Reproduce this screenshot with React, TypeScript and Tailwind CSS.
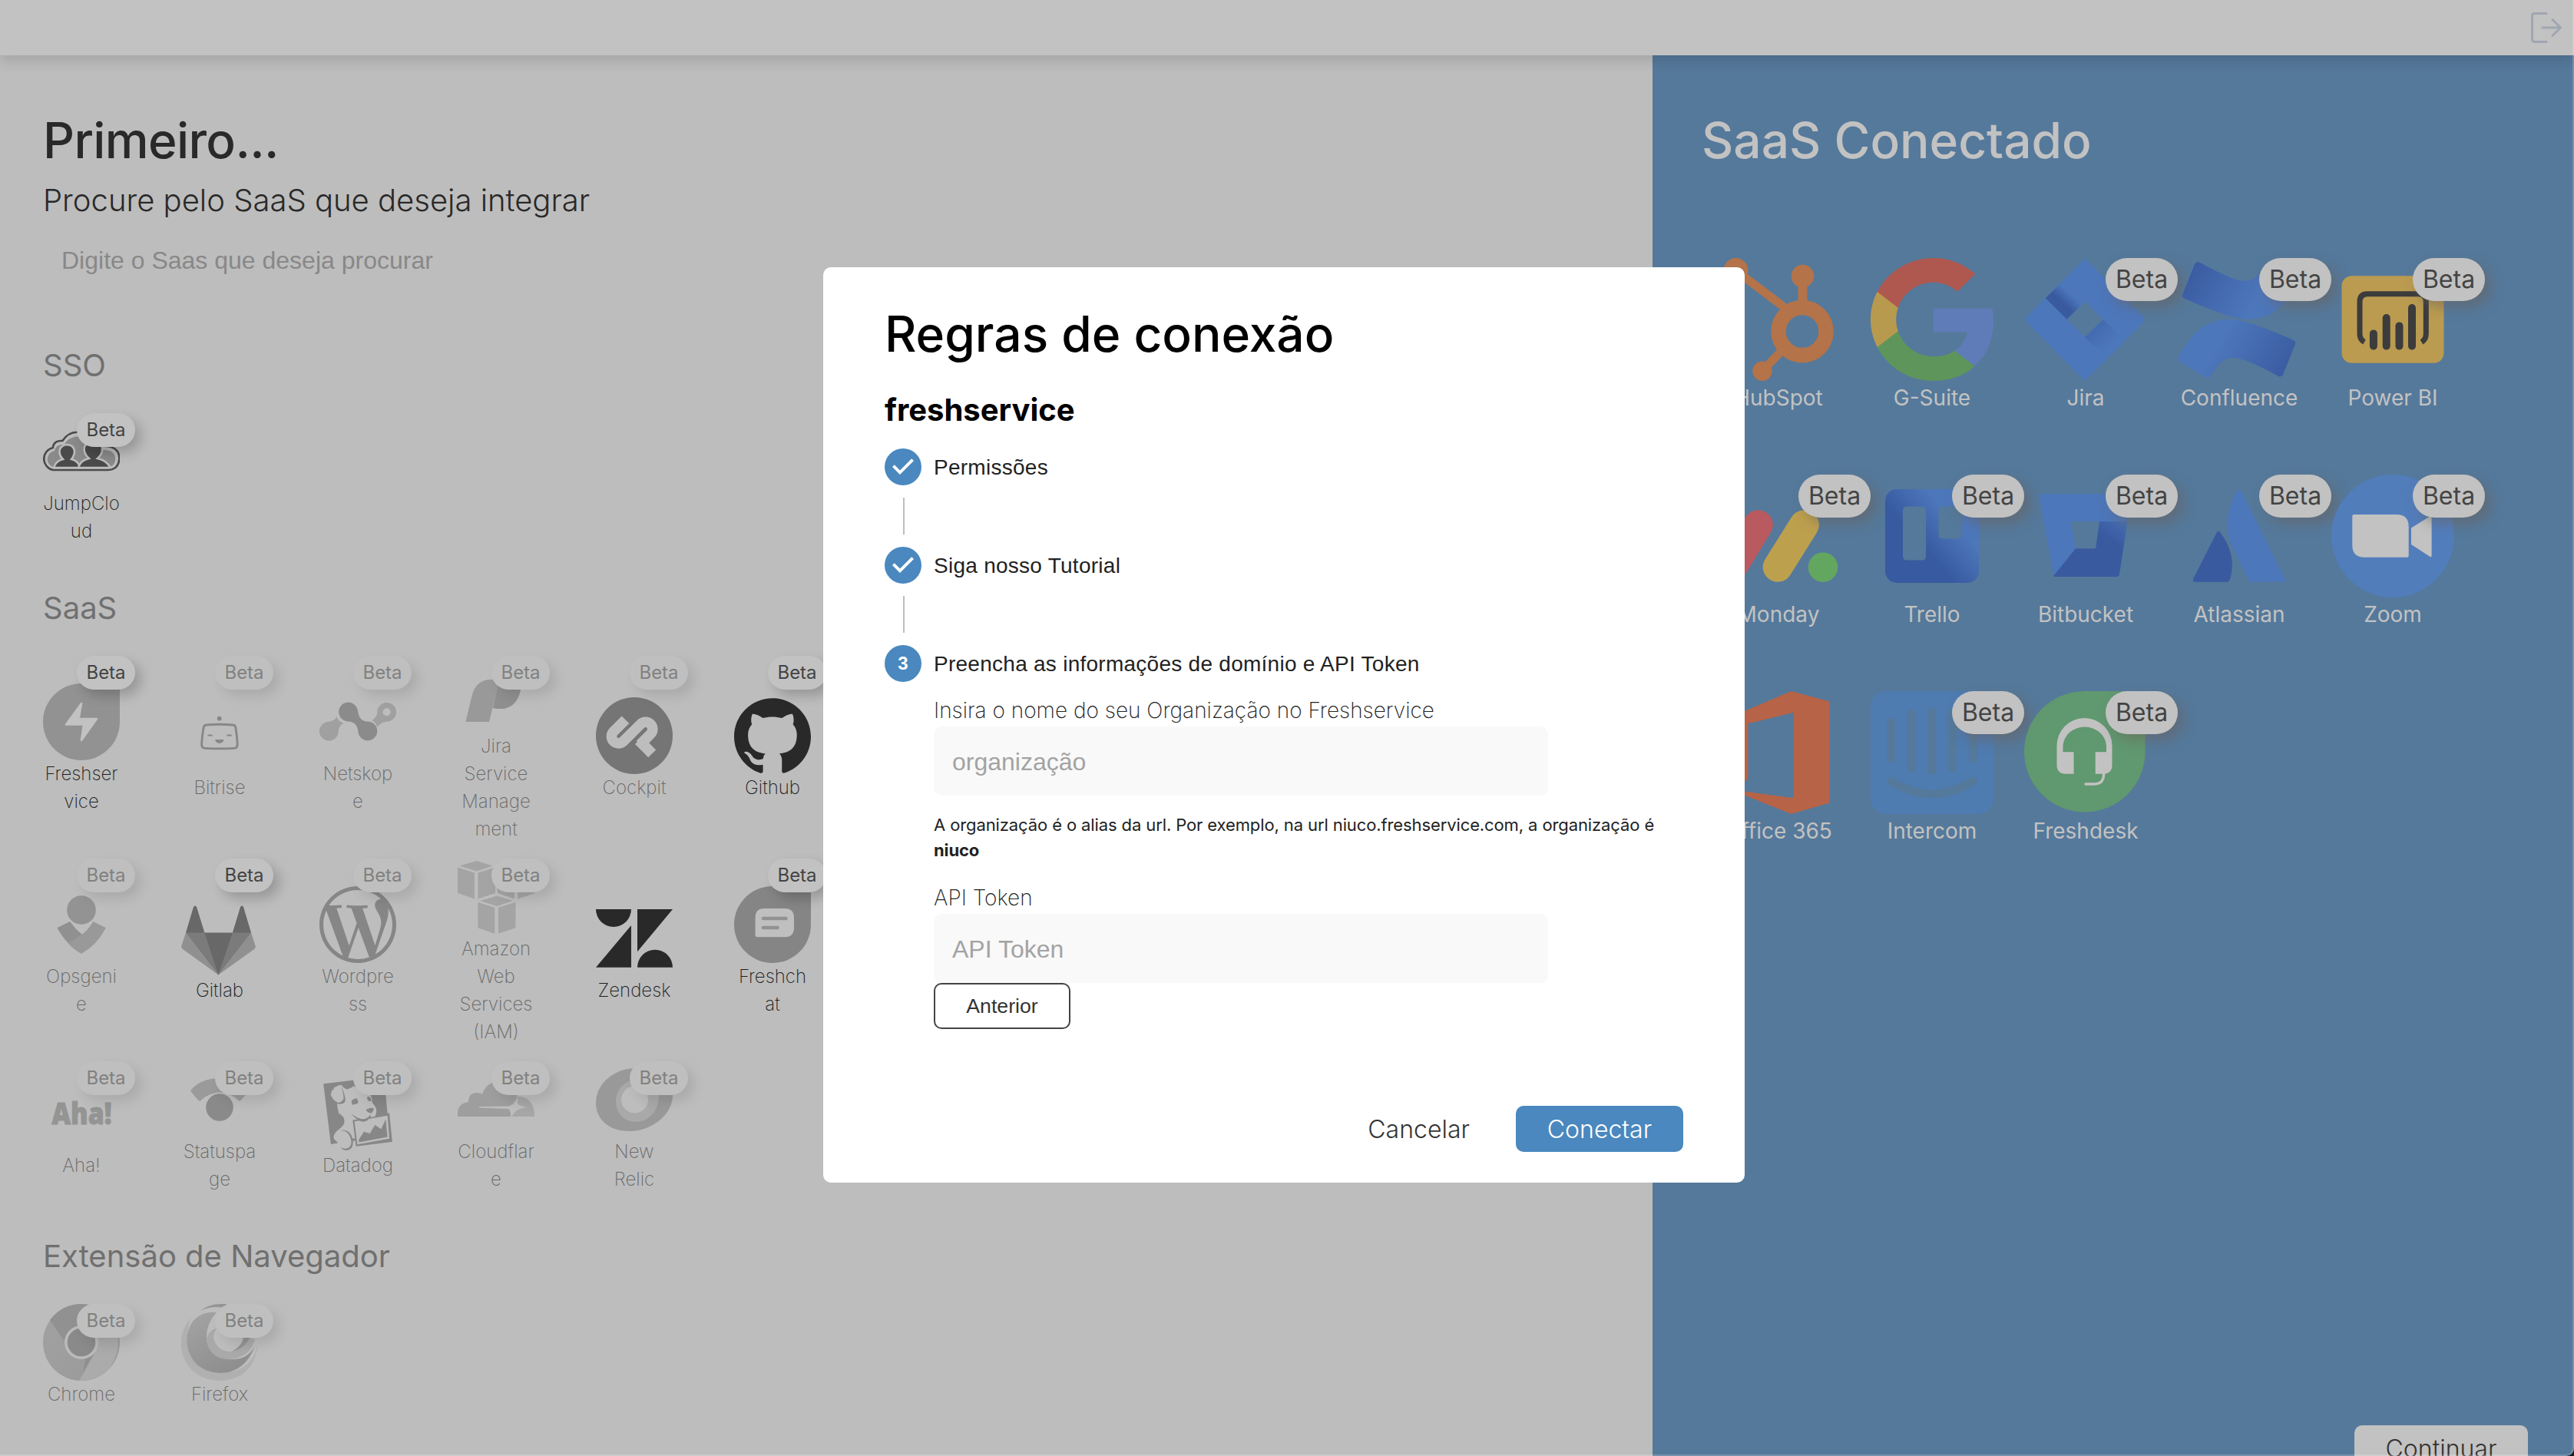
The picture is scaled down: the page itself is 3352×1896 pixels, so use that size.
import React from "react";
import { SiDatadog, SiGithub, SiWordpress } from "react-icons/si";

interface App {
  name: string;
  icon: React.ReactNode;
  enabled?: boolean;
  beta?: boolean;
}

const Drop = ({ color, children }: any) => (
  <svg viewBox="0 0 100 100" className="size-full">
    <path d="M50 0H97Q100 0 100 3V50A50 50 0 1 1 50 0Z" fill={color} />
    {children}
  </svg>
);

const JumpCloudIcon = () => (
  <svg viewBox="0 0 100 100" className="size-full">
    <g transform="translate(-3.8 1) scale(1.042 1)">
      <path d="M16 73A15 15 0 0 1 16 44Q17 34 28 35Q36 22 50 24Q68 24 74 42Q99 40 99 58Q98 73 84 73Z" fill="#bdbdbd" stroke="#4a4a4a" strokeWidth="2.5" />
      <path d="M16 69A11 11 0 0 1 18 48Q20 39 30 40Q36 29 50 29Q66 29 71 47Q94 45 94 58Q94 69 84 69Z" fill="#8a8a8a" />
    </g>
    <g fill="#4a4a4a" stroke="#bdbdbd" strokeWidth="2.5">
      <path d="M14 71Q17 62 26 60Q20 54 22 47Q25 41 32 41Q40 42 41 49Q41 55 37 60Q46 62 48 71Z" />
      <path d="M46 71Q49 61 60 59Q52 52 54 44Q57 36 66 36Q76 37 77 45Q78 53 71 59Q82 61 88 71Z" />
    </g>
  </svg>
);

const FreshserviceIcon = () => (
  <Drop color="#929292">
    <path d="M50 26L30 53.5H53L50 74L70 46H46.5Z" fill="#c2c2c2" stroke="#c2c2c2" strokeWidth="2.6" strokeLinejoin="round" />
  </Drop>
);

const BitriseIcon = () => (
  <svg viewBox="0 0 100 100" className="size-full" fill="#878787">
    <circle cx="49.7" cy="27.7" r="2.9" />
    <path d="M33 36Q50 34.6 67 36Q70 36 70.8 39Q72.600 49 73.200 61Q73.200 66.200 69 66.400Q50 67.400 31 66.400Q26.600 66.200 26.600 61Q27.200 49 29.200 39Q30 36 33 36Z" fill="none" stroke="#878787" strokeWidth="2.9" />
    <path d="M33.600 50.500A4.200 3.400 0 0 1 41.600 50.500Z" />
    <path d="M58.600 50.500A4.200 3.400 0 0 1 66.600 50.500Z" />
    <path d="M44.200 55H55.200A5.500 5 0 0 1 44.200 55Z" />
  </svg>
);

const NetskopeIcon = () => (
  <svg viewBox="0 0 100 100" className="size-full">
    <path d="M22.500 43.500Q24.500 49.500 31.500 51.500Q24.500 56 24.700 62.500A12.400 12.400 0 1 1 12.300 49.800Q19 49.500 22.500 43.500Z" fill="#a0a0a0" />
    <path d="M49.600 34C51 46 56 49.500 63 49.600A12.400 12.400 0 1 1 50.600 64C49.500 53 45 50 37.500 49.400A12.400 12.400 0 1 1 49.600 34Z" fill="#8b8b8b" />
    <path d="M75 57Q74.500 51 68 48Q75.500 43.500 75.200 37.500A12.400 12.400 0 1 1 88 49.700Q81 49.500 75 57Z" fill="#a0a0a0" />
    <circle cx="87.600" cy="37.200" r="5" fill="#bdbdbd" />
  </svg>
);

const JiraServiceIcon = () => (
  <svg viewBox="0 0 100 100" className="size-full">
    <path d="M10.400 86L18.500 52Q24 31 43 31H82Q84 50 74 61.500Q64 72 46 68L52.500 39L41 86Z" fill="#999999" />
    <path d="M53 36H82.500Q83 50 74 61.500Q64 72 46 68Z" fill="#8f8f8f" />
  </svg>
);

const CockpitIcon = () => (
  <svg viewBox="0 0 100 100" className="size-full">
    <circle cx="50" cy="50" r="50" fill="#757575" />
    <path d="M38.500 29.200L22.700 45A9 9 0 0 0 35.400 57.700L58.300 35A9 9 0 0 1 71.100 48L57.500 61.600" fill="none" stroke="#bdbdbd" strokeWidth="13.600" />
    <path d="M56 56L73.200 73.400" fill="none" stroke="#bdbdbd" strokeWidth="14" />
  </svg>
);

const OpsgenieIcon = () => (
  <svg viewBox="0 0 100 100" className="size-full" strokeLinejoin="round" strokeWidth="1.500">
    <circle cx="50" cy="31" r="18.800" fill="#939393" />
    <path d="M35 47L19.500 54.500Q25 65 33.300 73.500L50 63Q42 57 35 47Z" fill="#909090" stroke="#909090" />
    <path d="M65.400 47L80.800 54.500Q70 76 50 87Q40 81.500 33.300 73.900Q56 64 65.400 47Z" fill="#999999" stroke="#999999" />
  </svg>
);

const GitlabIcon = () => (
  <svg viewBox="0 0 100 100" className="size-full">
    <path d="M6 42.600L16 9Q18 6 20 9L30.400 42.600H66.900L77 9Q79 6 81 9L91 42.600L48.300 97.600Z" fill="#686868" />
    <path d="M6 42.600H30.400L48.300 97.600ZM91 42.600H66.900L48.300 97.600Z" fill="#7b7b7b" />
    <path d="M6 42.600L.200 60Q0 62.500 2 64L48.300 97.600ZM91 42.600L96.700 60Q97 62.500 95 64L48.300 97.600Z" fill="#909090" />
  </svg>
);

const cube = "M24.700 3L45.400 9.500L24.700 16.600L2.600 9.500ZM0 11.600L21.900 18.400V52.400L0 44.900ZM26.500 18.400L49 11.600V44.900L26.500 52.400Z";

const AwsIcon = () => (
  <svg viewBox="0 0 100 100" className="size-full" fill="#a4a4a4">
    <path d={cube} />
    <path d={cube} transform="translate(51.800 0)" />
    <path d={cube} transform="translate(26.400 45.400)" />
  </svg>
);

const ZendeskIcon = () => (
  <svg viewBox="0 0 100 100" className="size-full" fill="#292929">
    <path d="M0 12H46A23 23 0 0 1 0 12ZM46 33V87.700H0ZM54 12H100L54 67.300ZM54 87.700A23 23 0 0 1 100 87.700Z" />
  </svg>
);

const FreshchatIcon = () => (
  <Drop color="#858585">
    <path d="M39 29H66Q78 29 78 41V54Q78 66.300 66 66.300H30Q27.600 66.300 27.600 64V41Q27.600 29 39 29Z" fill="#bfbfbf" />
    <path d="M38 42H67.500M38 54H56.500" stroke="#929292" strokeWidth="4.600" strokeLinecap="round" />
  </Drop>
);

const AhaIcon = () => (
  <svg viewBox="0 0 100 100" className="size-full">
    <text x="11.500" y="64" fontSize="38" fontWeight="800" textLength="78" lengthAdjust="spacingAndGlyphs" fill="#949494" stroke="#949494" strokeWidth="1" fontFamily="'Open Sans', sans-serif">
      Aha!
    </text>
  </svg>
);

const StatuspageIcon = () => (
  <svg viewBox="0 0 100 100" className="size-full">
    <path d="M13 37Q26 22 50 22Q74 22 87 37Q88 38.500 87 40L77.500 51Q76 52.500 74.500 51Q64 41 50 41Q36 41 25.500 51Q24 52.500 22.500 51L13 40Q12 38.500 13 37Z" fill="#9a9a9a" />
    <circle cx="50" cy="60" r="19.500" fill="#bdbdbd" />
    <circle cx="50" cy="60" r="17.800" fill="#8a8a8a" />
  </svg>
);

const CloudflareIcon = () => (
  <svg viewBox="0 0 100 100" className="size-full">
    <path d="M0 72V68Q0 55 14 53Q14 41 25 41Q30 41 32 43Q38 26 55 26Q74 28 78 44L70 72Z" fill="#9e9e9e" />
    <path d="M71 72Q73 64 78 61V46Q96 45 100 66V72Z" fill="#a6a6a6" />
    <path d="M28 59L66 58.500Q73 57 75 51Q78 58 90 60Q78 61.500 74 67L69 72.500Q70 65 66 62L28 60.500Z" fill="#bdbdbd" />
  </svg>
);

const NewRelicIcon = () => (
  <svg viewBox="0 0 100 100" className="size-full">
    <path d="M52 9C80 9 100 24 100 44C100 70 72 91 44 91C16 91 0 75 0 54C0 29 24 9 52 9Z" fill="#999999" />
    <path d="M56 23C72 23 82 33 82 46C82 64 68 79 53 79C37 79 26 68 26 52C26 36 40 23 56 23Z" fill="#a9a9a9" />
    <ellipse cx="50.500" cy="50" rx="17.500" ry="17.500" fill="#bdbdbd" />
  </svg>
);

const ChromeIcon = () => (
  <svg viewBox="0 0 100 100" className="size-full">
    <defs>
      <linearGradient id="chromeBase" x1="0" y1="0" x2="1" y2="1">
        <stop offset="0" stopColor="#a2a2a2" />
        <stop offset="1" stopColor="#999999" />
      </linearGradient>
    </defs>
    <circle cx="50" cy="50" r="50" fill="url(#chromeBase)" />
    <path d="M9 21A50 50 0 0 1 94 27H50Q34 28 29 50Z" fill="#919191" />
    <path d="M50 28H94Q104 56 88 82Q72 100 47 100L67 65Q74 46 60 32Z" fill="#ababab" />
    <path d="M55 72L67 62L52 90Z" fill="#8f8f8f" />
    <circle cx="50" cy="50" r="22" fill="#bababa" />
    <circle cx="50" cy="50" r="18.300" fill="#8a8a8a" />
  </svg>
);

const FirefoxIcon = () => (
  <svg viewBox="0 0 100 100" className="size-full">
    <defs>
      <linearGradient id="foxBody" x1="0" y1="0" x2=".6" y2="1">
        <stop offset="0" stopColor="#a4a4a4" />
        <stop offset="1" stopColor="#8e8e8e" />
      </linearGradient>
    </defs>
    <path d="M13 18Q-4 36 1 62Q10 98 50 100Q96 98 100 50Q94 88 52 90Q8 86 8 46Q8 28 13 18Z" fill="#b0b0b0" />
    <path d="M25 9Q36 -1 58 0L62 6Q40 1 25 9Z" fill="#959595" />
    <path d="M46 11Q26 9 14 24Q4 40 9 60Q18 88 50 90Q84 90 97 52Q88 74 62 72Q36 70 33 46Q32 26 46 11Z" fill="url(#foxBody)" />
    <path d="M33 45Q36 72 62 72Q90 70 96 46L80 42Q80 62 62 62Q46 60 42 44Q42 38 46 32Q36 34 33 45Z" fill="#a9a9a9" />
    <path d="M66 62Q84 58 90 42H82Q80 54 66 62Z" fill="#939393" />
  </svg>
);

const HubSpotIcon = () => (
  <svg viewBox="0 0 160 160" className="size-full" fill="#b47349" stroke="#b47349">
    <g stroke="none">
      <circle cx="24.500" cy="16" r="16" />
      <circle cx="111.500" cy="23.500" r="14.800" />
      <circle cx="59" cy="147.300" r="12.700" />
    </g>
    <path d="M24 16L90 66M84 121L61 145" strokeWidth="11" />
    <path d="M111.500 30V66" strokeWidth="12" />
    <circle cx="111" cy="95.600" r="31" fill="none" strokeWidth="19.500" />
  </svg>
);

const GoogleIcon = () => (
  <svg viewBox="0 0 533.5 544.3" preserveAspectRatio="none" className="size-full">
    <path fill="#5f7cb8" d="M533.5 278.400c0-18.500-1.500-37.100-4.700-55.300H272.100v104.800h147c-6.100 33.800-25.700 63.700-54.400 82.700v68h87.700c51.500-47.400 81.100-117.400 81.100-200.200z" />
    <path fill="#5e955b" d="M272.100 544.300c73.400 0 135.300-24.100 180.400-65.700l-87.700-68c-24.400 16.600-55.900 26-92.600 26-71 0-131.200-47.900-152.800-112.300H28.900v70.100c46.200 91.900 140.300 149.900 243.200 149.900z" />
    <path fill="#b89a4e" d="M119.300 324.300c-11.400-33.800-11.400-70.400 0-104.200V150H28.900c-38.600 76.900-38.600 167.500 0 244.400l90.400-70.100z" />
    <path fill="#ae5850" d="M272.100 107.700c38.800-.600 76.300 14 104.400 40.800l77.700-77.700C405 24.600 339.700-.800 272.100 0 169.200 0 75.100 58 28.900 150l90.400 70.100c21.500-64.500 81.800-112.400 152.800-112.400z" />
  </svg>
);

const JiraIcon = () => (
  <svg viewBox="0 0 160 160" className="size-full">
    <defs>
      <linearGradient id="jiraA" gradientUnits="userSpaceOnUse" x1="60" y1="46" x2="45" y2="62">
        <stop offset="0" stopColor="#4d77bb" />
        <stop offset=".7" stopColor="#3a5aa0" />
      </linearGradient>
      <linearGradient id="jiraB" gradientUnits="userSpaceOnUse" x1="90" y1="92" x2="112" y2="114">
        <stop offset="0" stopColor="#426ab0" />
        <stop offset="1" stopColor="#4d77bb" />
      </linearGradient>
    </defs>
    <path d="M79 .600L155 76Q158.500 80 155 84L79 160L3.500 84Q.500 80 3.500 76ZM79 56.500L55.500 79.700L79 103.300L103 80Z" fill="#4d77bb" fillRule="evenodd" />
    <path d="M27.800 52.300L46.400 34L76 59.500L55.500 79.700Z" fill="url(#jiraA)" />
    <path d="M103 80L131 108L112 127Q92 118 79 103.300Z" fill="url(#jiraB)" />
  </svg>
);

const ConfluenceIcon = () => (
  <svg viewBox="0 0 160 160" className="size-full">
    <defs>
      <linearGradient id="confluence" gradientUnits="userSpaceOnUse" x1="145" y1="150" x2="60" y2="100">
        <stop offset="0" stopColor="#3a5aa0" />
        <stop offset="1" stopColor="#4d77bb" />
      </linearGradient>
    </defs>
    <path id="confluencePart" d="M1 129Q25 80 67 79.700Q88 79 151 107Q154 109 153 112L137 152Q135 155.500 131 154Q88 130 72 129.700Q58 130 50 143L42 154Q39.500 157.500 36 155L1.500 134Q-.500 132 1 129Z" fill="url(#confluence)" />
    <use href="#confluencePart" transform="rotate(180 79.600 79.800)" />
  </svg>
);

const PowerBIIcon = () => (
  <svg viewBox="0 0 160 160" className="size-full">
    <rect x="13.500" y="23.300" width="133" height="113.500" rx="13" fill="#ba9b50" />
    <path d="M43 109.500Q37 106 37 99V57Q37 46.800 47 46.800H113Q123.300 46.800 123.300 57V99Q123.300 106 117.500 109.500" fill="none" stroke="#3c3c3c" strokeWidth="7" />
    <path d="M54.900 98.400V114.600M71.700 78V114.600M88.500 88.400V114.600M105 65V114.600" stroke="#3c3c3c" strokeWidth="10" strokeLinecap="round" />
  </svg>
);

const MondayIcon = () => (
  <svg viewBox="0 0 160 160" className="size-full">
    <g strokeWidth="38.600" strokeLinecap="round">
      <path d="M53.500 65.500L20 120.400" stroke="#b85a60" />
      <path d="M113.500 65.500L79 120.400" stroke="#bda04e" />
    </g>
    <circle cx="138" cy="120.700" r="19.300" fill="#63a65f" />
  </svg>
);

const TrelloIcon = () => (
  <svg viewBox="0 0 160 160" className="size-full">
    <defs>
      <linearGradient id="trello" gradientUnits="userSpaceOnUse" x1="65" y1="90" x2="105" y2="55">
        <stop offset="0" stopColor="#385aa0" />
        <stop offset="1" stopColor="#4d77bb" />
      </linearGradient>
    </defs>
    <rect x="19" y="19" width="122" height="122" rx="15" fill="url(#trello)" />
    <rect x="42" y="41.600" width="30" height="70" rx="5" fill="#55799b" />
    <rect x="88.400" y="41.600" width="30" height="42" rx="5" fill="#55799b" />
  </svg>
);

const BitbucketIcon = () => (
  <svg viewBox="0 0 160 160" className="size-full">
    <defs>
      <linearGradient id="bitbucket" gradientUnits="userSpaceOnUse" x1="130" y1="58" x2="112" y2="84">
        <stop offset="0" stopColor="#4870b5" />
        <stop offset="1" stopColor="#3a5aa0" />
      </linearGradient>
    </defs>
    <path d="M22 25.300H138Q141 25.300 140.500 29L134.600 61H61L67 96.300L38.500 132.500L19.500 29Q19 25.300 22 25.300Z" fill="#4d77bb" />
    <path d="M98 61H134.600L124 130Q123.500 133 120.500 133H41Q39 133 38 132L67 96.300H93Z" fill="url(#bitbucket)" />
  </svg>
);

const AtlassianIcon = () => (
  <svg viewBox="0 0 160 160" className="size-full">
    <path d="M77.500 21Q80 17.500 82.500 21L139 135.500Q141 139.700 137 139.700H96Q93.500 139.700 92 137L70 92Q56 60 77.500 21Z" fill="#4d77bb" />
    <path d="M51 75Q53 72 55 75Q77 104 68.500 135Q67 139.700 64 139.700H22.500Q18.500 139.700 20.500 135Z" fill="#3a5aa0" />
  </svg>
);

const ZoomIcon = () => (
  <svg viewBox="0 0 160 160" className="size-full">
    <circle cx="80" cy="80" r="80" fill="#527dbb" />
    <path d="M29.500 52H85Q100.700 52 100.700 68V106Q100.700 107.800 98.500 107.800H43Q27.300 107.800 27.300 92V54Q27.300 52 29.500 52ZM104 69.500L129 54Q130.600 53.500 130.600 55.500V105.500Q130.600 108 128.600 107L104 91Z" fill="#c2c2c2" />
  </svg>
);

const OfficeIcon = () => (
  <svg viewBox="0 0 160 160" className="size-full">
    <path d="M17 34L96.500 0L145 13Q146.700 13.500 146.700 16V143.500Q146.700 145.500 145 146L96.500 160L17 128L100 139.300V27.700L40.400 42.300V112Q40.400 115 38 116.500L17 128Z" fill="#b76347" />
  </svg>
);

const IntercomIcon = () => (
  <svg viewBox="0 0 160 160" className="size-full">
    <rect width="160" height="160" rx="20" fill="#4e7bb0" />
    <path d="M26.600 40V88M53.200 29V100M80 26.500V103.500M106.600 29V100M133.400 40V88M26.600 117Q80 151 133.400 117" fill="none" stroke="#55799b" strokeWidth="10.700" strokeLinecap="round" />
  </svg>
);

const FreshdeskIcon = () => (
  <svg viewBox="0 0 160 160" className="size-full">
    <path d="M78.800 0H153Q157.600 0 157.600 5V78.800A78.800 78.800 0 1 1 78.800 0Z" fill="#60986f" />
    <path d="M42.500 71A36 36 0 0 1 114.500 71V96Q114.500 107.700 103 107.700H92.700V79.300H107V71A28.300 26 0 0 0 50.500 71V79.300H64.600V107.700H54Q42.500 107.700 42.500 96Z" fill="#c2c2c2" />
    <path d="M103.600 106V109Q103 121 91 121H80" fill="none" stroke="#c2c2c2" strokeWidth="3.500" strokeLinecap="round" />
  </svg>
);

const CheckCircle = () => (
  <svg viewBox="0 0 24 24" className="size-[52px] -m-0.5" fill="#4a88bf">
    <path d="M12 0a12 12 0 1 0 0 24 12 12 0 0 0 0-24zm-2 17l-5-5 1.400-1.400 3.600 3.600 7.600-7.600L19 8l-9 9z" transform="translate(.92 .92) scale(.923)" />
  </svg>
);

const sso: App[] = [{ name: "JumpClo\nud", icon: <JumpCloudIcon />, enabled: true, beta: true }];

const saas: App[] = [
  { name: "Freshser\nvice", icon: <FreshserviceIcon />, enabled: true, beta: true },
  { name: "Bitrise", icon: <BitriseIcon />, beta: true },
  { name: "Netskop\ne", icon: <NetskopeIcon />, beta: true },
  { name: "Jira\nService\nManage\nment", icon: <JiraServiceIcon />, beta: true },
  { name: "Cockpit", icon: <CockpitIcon />, beta: true },
  { name: "Github", icon: <SiGithub className="size-full text-[#292929]" />, enabled: true, beta: true },
  { name: "Opsgeni\ne", icon: <OpsgenieIcon />, beta: true },
  { name: "Gitlab", icon: <GitlabIcon />, enabled: true, beta: true },
  { name: "Wordpre\nss", icon: <SiWordpress className="size-full text-[#868686]" />, beta: true },
  { name: "Amazon\nWeb\nServices\n(IAM)", icon: <AwsIcon />, beta: true },
  { name: "Zendesk", icon: <ZendeskIcon />, enabled: true },
  { name: "Freshch\nat", icon: <FreshchatIcon />, enabled: true, beta: true },
  { name: "Aha!", icon: <AhaIcon />, beta: true },
  { name: "Statuspa\nge", icon: <StatuspageIcon />, beta: true },
  { name: "Datadog", icon: <SiDatadog className="size-full p-0.5 text-[#878787]" />, beta: true },
  { name: "Cloudflar\ne", icon: <CloudflareIcon />, beta: true },
  { name: "New\nRelic", icon: <NewRelicIcon />, beta: true },
];

const extensions: App[] = [
  { name: "Chrome", icon: <ChromeIcon />, beta: true },
  { name: "Firefox", icon: <FirefoxIcon />, beta: true },
];

const connected: App[] = [
  { name: "HubSpot", icon: <HubSpotIcon /> },
  { name: "G-Suite", icon: <GoogleIcon /> },
  { name: "Jira", icon: <JiraIcon />, beta: true },
  { name: "Confluence", icon: <ConfluenceIcon />, beta: true },
  { name: "Power BI", icon: <PowerBIIcon />, beta: true },
  { name: "Monday", icon: <MondayIcon />, beta: true },
  { name: "Trello", icon: <TrelloIcon />, beta: true },
  { name: "Bitbucket", icon: <BitbucketIcon />, beta: true },
  { name: "Atlassian", icon: <AtlassianIcon />, beta: true },
  { name: "Zoom", icon: <ZoomIcon />, beta: true },
  { name: "Office 365", icon: <OfficeIcon /> },
  { name: "Intercom", icon: <IntercomIcon />, beta: true },
  { name: "Freshdesk", icon: <FreshdeskIcon />, beta: true },
];

const Section = ({ title, apps }: { title: string; apps: App[] }) => (
  <section className="mb-[52px]">
    <h2 className="mb-8 text-[40px] leading-[60px] text-[#707070]">{title}</h2>
    <div className="grid grid-cols-[repeat(6,100px)] gap-x-20 gap-y-5">
      {apps.map((app) => (
        <div key={app.name} className="relative flex flex-col items-center justify-center">
          <div className="size-[100px]">{app.icon}</div>
          <p
            className={`whitespace-pre text-center text-2xl leading-9 font-extralight ${
              app.enabled ? "text-[#1c1c1c]" : "text-[#696969]"
            }`}
          >
            {app.name}
          </p>
          {app.beta && (
            <span
              className={`absolute top-0 left-11 h-11 w-[76px] rounded-full text-center text-2xl leading-[44px] ${
                app.enabled
                  ? "bg-[#c2c2c2] text-[#444444] shadow-[8px_8px_16px_rgba(0,0,0,0.2)]"
                  : "bg-[#bfbfbf] text-[#818181] shadow-[8px_8px_16px_rgba(0,0,0,0.1)]"
              }`}
            >
              Beta
            </span>
          )}
        </div>
      ))}
    </div>
  </section>
);

const Modal = () => (
  <div className="fixed top-0 left-0 flex h-[1888px] w-[3344px] items-center justify-center">
    <div className="flex h-[1192px] w-[1200px] flex-col rounded-[10px] bg-white px-20 pt-[39px] pb-10 text-[#222222]">
      <h1 className="text-[64px] leading-[96px] font-medium text-black">Regras de conexão</h1>
      <h3 className="mt-[21px] mb-5 text-[40px] leading-[60px] font-bold text-black">freshservice</h3>

      <div className="flex flex-col font-['Liberation_Sans',sans-serif] text-[28px] leading-[48px] tracking-[0.00938em]">
        {["Permissões", "Siga nosso Tutorial"].map((label) => (
          <React.Fragment key={label}>
            <div className="flex h-12 items-center gap-4">
              <CheckCircle />
              <span className="pt-0.5">{label}</span>
            </div>
            <div className="my-4 ml-6 h-12 w-0.5 bg-[#bdbdbd]" />
          </React.Fragment>
        ))}
        <div className="flex h-12 items-center gap-4">
          <div className="flex size-12 items-center justify-center rounded-full bg-[#4a88bf] text-2xl font-bold text-white">3</div>
          <span className="pt-0.5">Preencha as informações de domínio e API Token</span>
        </div>
      </div>

      <div className="flex flex-col items-start pl-16">
        <label className="mt-[17px] text-[28px] leading-[41px] font-extralight">
          Insira o nome do seu Organização no Freshservice
        </label>
        <input
          className="h-[90px] w-[800px] rounded-[10px] bg-[#f9f9f9] px-6 pt-0.5 font-['Liberation_Sans',sans-serif] text-[32px] placeholder:text-[#a3a3a3]"
          type="text"
          placeholder="organização"
        />
        <p className="mt-[22px] text-[22px] leading-[33px] tracking-[-0.005em]">
          A organização é o alias da url. Por exemplo, na url niuco.freshservice.com, a organização é
          <br />
          <b>niuco</b>
        </p>
        <label className="mt-[25px] text-[28px] leading-[41px] font-extralight">API Token</label>
        <input
          className="h-[90px] w-[800px] rounded-[10px] bg-[#f9f9f9] px-6 pt-0.5 font-['Liberation_Sans',sans-serif] text-[32px] placeholder:text-[#a3a3a3]"
          type="text"
          placeholder="API Token"
        />
        <button className="h-[60px] w-[178px] rounded-[10px] border-2 border-[#444444] font-['Liberation_Sans',sans-serif] text-[26.67px] text-[#333333]">
          Anterior
        </button>
      </div>

      <div className="mt-auto flex items-center justify-end gap-[60px] text-[32px] font-light">
        <button className="pt-0.5 text-[#333333]">Cancelar</button>
        <button className="h-[60px] w-[218px] rounded-[10px] bg-[#4a88bf] pt-0.5 text-white">Conectar</button>
      </div>
    </div>
  </div>
);

const App = () => {
  return (
    <div className="relative flex h-[1896px] w-full flex-col overflow-hidden bg-[#bdbdbd] font-['Inter',sans-serif]">
      <header className="z-10 flex h-[72px] shrink-0 items-center justify-end bg-[#c2c2c2] pr-4 shadow-[0_8px_16px_rgba(0,0,0,0.12)]">
        <svg viewBox="0 0 40 40" className="size-10" fill="none" stroke="#a0a6b1" strokeWidth="3" strokeLinecap="round" strokeLinejoin="round">
          <path d="M20 1.500H5Q1.500 1.500 1.500 5V35Q1.500 38.500 5 38.500H20M15 20H38M28 9.500L38.500 20L28 30.500" />
        </svg>
      </header>

      <div className="flex min-h-0 flex-1">
        <main className="flex-1 pt-[63px] pl-14">
          <h1 className="text-[64px] leading-[96px] font-medium tracking-[-0.01em] text-[#292929]">Primeiro...</h1>
          <p className="text-[40px] leading-[60px] font-light text-[#292929]">Procure pelo SaaS que deseja integrar</p>
          <input
            className="mb-[60px] block h-[95px] w-[800px] px-6 pt-px font-['Liberation_Sans',sans-serif] text-[32px] placeholder:text-[#888888]"
            type="text"
            placeholder="Digite o Saas que deseja procurar"
          />
          <Section title="SSO" apps={sso} />
          <Section title="SaaS" apps={saas} />
          <Section title="Extensão de Navegador" apps={extensions} />
        </main>

        <aside className="flex w-[1200px] flex-col bg-[#55799b] px-16 pt-[63px] text-[#c2c2c2]">
          <h1 className="mb-[105px] text-[64px] leading-[96px] font-medium">SaaS Conectado</h1>
          <div className="grid grid-cols-[repeat(5,200px)] gap-y-20">
            {connected.map((app) => (
              <div key={app.name} className="relative mx-5 flex flex-col items-center">
                <div className="size-40">{app.icon}</div>
                <p className="-mb-0.5 text-[28px] leading-[44px]">{app.name}</p>
                {app.beta && (
                  <span className="absolute top-0 left-[106px] h-14 w-[94px] rounded-full bg-[#c2c2c2] text-center text-[32px] leading-[56px] text-[#444444] shadow-[8px_8px_16px_rgba(105,95,90,0.5)]">
                    Beta
                  </span>
                )}
              </div>
            ))}
          </div>
          <button className="mt-[754px] -mr-1 h-[60px] w-[226px] shrink-0 self-end rounded-[10px] bg-[#c2c2c2] pt-0.5 text-[32px] font-light text-[#333333]">
            Continuar
          </button>
        </aside>
      </div>

      <Modal />

      {/* window edge */}
      <div className="pointer-events-none absolute inset-0 z-20 rounded-br-[10px] border-r-2 border-b-2 border-white/20 shadow-[4px_4px_0_4px_#1a1d22]" />
    </div>
  );
};

export default App;
